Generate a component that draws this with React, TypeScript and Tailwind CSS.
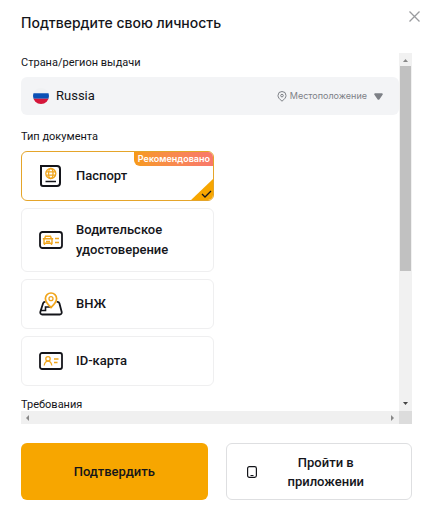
import { useState, type ReactNode } from "react";
import clsx from "clsx";

type DocumentType = "passport" | "driver" | "residence" | "id";

function PassportIcon() {
  return (
    <svg width="22" height="24" viewBox="0 0 22 24" fill="none">
      <path
        d="M1 2h16a3 3 0 0 1 3 3v14a3 3 0 0 1-3 3H3a2 2 0 0 1-2-2z"
        stroke="#14151a"
        strokeWidth="2"
      />
      <g stroke="#f0a51c" strokeWidth="1.300">
        <circle cx="10.800" cy="9.500" r="5" />
        <ellipse cx="10.800" cy="9.500" rx="2.200" ry="5" />
        <path d="M6.200 7.800h9.200M6.200 11.200h9.200" />
      </g>
      <path d="M5.500 17.500h10.500" stroke="#14151a" strokeWidth="1.600" />
    </svg>
  );
}

function DriverIcon() {
  return (
    <svg width="24" height="18" viewBox="0 0 24 18" fill="none">
      <rect x="1" y="1" width="22" height="16" rx="2.500" stroke="#14151a" strokeWidth="1.800" />
      <g stroke="#f0a51c" strokeWidth="1.400">
        <path d="M5.400 8.200l1.100-3h5l1.100 3M3.800 7.800h10.400M5 8.500v3.800h8V8.500M7 10.500h4M5.500 12v2M12.500 12v2" />
        <path d="M16 7.500h4M16 11.500h4" />
      </g>
    </svg>
  );
}

function ResidenceIcon() {
  return (
    <svg width="24" height="24" viewBox="0 0 24 24" fill="none">
      <path
        d="M6.500 9.800H6a2 2 0 0 0-1.900 1.400L1.300 20a2 2 0 0 0 1.900 2.500h17.600a2 2 0 0 0 1.900-2.500l-2.300-8.800a2 2 0 0 0-1.900-1.400h-.8"
        stroke="#14151a"
        strokeWidth="1.800"
      />
      <path d="M2 18.500h4.500v-3.500h4.500" stroke="#14151a" strokeWidth="1.600" />
      <path
        d="M12 15.500C8.500 12.400 6.400 9.700 6.400 6.600a5.600 5.600 0 0 1 11.200 0c0 3.100-2.100 5.800-5.600 8.900z"
        fill="#fff"
        stroke="#f0a51c"
        strokeWidth="1.700"
      />
      <circle cx="12" cy="6.700" r="2" stroke="#f0a51c" strokeWidth="1.300" />
    </svg>
  );
}

function IdIcon() {
  return (
    <svg width="24" height="18" viewBox="0 0 24 18" fill="none">
      <rect x="1" y="1" width="22" height="16" rx="2" stroke="#14151a" strokeWidth="1.800" />
      <g stroke="#f0a51c" strokeWidth="1.300">
        <circle cx="9" cy="6.800" r="2.200" />
        <path d="M5.200 13.500c.5-2.800 1.800-4.300 3.800-4.300s3.300 1.500 3.800 4.300M15 7h4.500M15 10.500h3.500" />
      </g>
    </svg>
  );
}

const DOCUMENTS: {
  type: DocumentType;
  label: string;
  icon: ReactNode;
  recommended?: boolean;
}[] = [
  { type: "passport", label: "Паспорт", icon: <PassportIcon />, recommended: true },
  { type: "driver", label: "Водительское удостоверение", icon: <DriverIcon /> },
  { type: "residence", label: "ВНЖ", icon: <ResidenceIcon /> },
  { type: "id", label: "ID-карта", icon: <IdIcon /> },
];

function CountrySelect() {
  return (
    <div className="flex h-[38px] items-center rounded-md bg-[#f3f4f6] px-3 text-[#7d8086]">
      <svg width="16" height="16" viewBox="0 0 16 16" className="shrink-0">
        <clipPath id="flag">
          <circle cx="8" cy="8" r="8" />
        </clipPath>
        <g clipPath="url(#flag)">
          <path d="M0 0h16v5.300H0z" fill="#f0f1f3" />
          <path d="M0 5.300h16v5.400H0z" fill="#0b50b5" />
          <path d="M0 10.700h16V16H0z" fill="#d5163a" />
        </g>
      </svg>
      <select
        id="country"
        defaultValue="ru"
        className="ml-[7px] min-w-0 flex-1 appearance-none bg-transparent text-[13px] text-[#14151a] outline-none"
      >
        <option value="ru">Russia</option>
      </select>
      <svg width="10" height="11" viewBox="0 0 10 11" fill="none" stroke="currentColor" className="shrink-0">
        <path d="M5 10.200C2.300 8 1 6.400 1 4.500a4 4 0 0 1 8 0c0 1.900-1.300 3.500-4 5.700z" />
        <circle cx="5" cy="4.600" r="1.300" />
      </svg>
      <span className="ml-[3px] font-['Inter','Noto_Sans',sans-serif] text-[9px]">Местоположение</span>
      <svg width="9" height="7" viewBox="0 0 9 7" fill="currentColor" className="ml-[7px] mr-1 shrink-0">
        <path d="M1.200.3h6.600c.9 0 1.300.8.800 1.500L5.500 6.200c-.5.700-1.500.7-2 0L.4 1.800C-.1 1.100.3.300 1.200.3z" />
      </svg>
    </div>
  );
}

function VerticalScrollbar() {
  return (
    <div className="flex flex-col items-center bg-[#f1f1f1] py-[6px]" aria-hidden="true">
      <svg width="5" height="3" viewBox="0 0 5 3" fill="#898989">
        <path d="M0 3L2.500 0 5 3z" />
      </svg>
      <div className="mt-1 h-[205px] w-[11px] bg-[#c1c1c1]" />
      <svg width="5" height="3" viewBox="0 0 5 3" fill="#444" className="mt-auto">
        <path d="M0 0L2.500 3 5 0z" />
      </svg>
    </div>
  );
}

function HorizontalScrollbar() {
  return (
    <div className="flex h-[13px] items-center justify-between bg-[#f0f0f0] px-[5px]" aria-hidden="true">
      <svg width="3" height="6" viewBox="0 0 3 6" fill="#888">
        <path d="M3 0L0 3l3 3z" />
      </svg>
      <svg width="3" height="6" viewBox="0 0 3 6" fill="#888">
        <path d="M0 0l3 3-3 3z" />
      </svg>
    </div>
  );
}

export default function App() {
  const [selected, setSelected] = useState<DocumentType>("passport");

  return (
    <main className="bg-white pl-[21px] pr-5 font-['Roboto','Noto_Sans',sans-serif] text-[#14151a]">
      <header className="relative pt-[13px]">
        <h1 className="font-['Inter','Noto_Sans',sans-serif] text-sm font-medium leading-5">
          Подтвердите свою личность
        </h1>
        <button
          type="button"
          aria-label="Закрыть"
          className="absolute -right-2 top-[11px]"
        >
          <svg width="11" height="11" viewBox="0 0 11 11" stroke="#999b9e" strokeWidth="1.300">
            <path d="M.5.500l10 10M10.500.500l-10 10" />
          </svg>
        </button>
      </header>

      <div className="mt-5 grid grid-cols-[minmax(0,1fr)_13px]">
        <div>
          <label htmlFor="country" className="block text-[11px] leading-5">
            Страна/регион выдачи
          </label>
          <div className="mt-1">
            <CountrySelect />
          </div>

          <fieldset className="mt-3">
            <legend className="text-[11px] leading-5">Тип документа</legend>
            <div className="mt-1 flex w-[193px] flex-col gap-[7px]">
              {DOCUMENTS.map((doc) => {
                const isSelected = doc.type === selected;
                return (
                  <label
                    key={doc.type}
                    className={clsx(
                      "relative flex min-h-[50px] cursor-pointer items-center overflow-hidden rounded-md border py-[11px] pl-[17px] pr-4",
                      isSelected ? "border-[#e5a52a]" : "border-[#efeff0]",
                    )}
                  >
                    <input
                      type="radio"
                      name="document"
                      value={doc.type}
                      checked={isSelected}
                      onChange={() => setSelected(doc.type)}
                      className="sr-only"
                    />
                    <span className="flex w-6 shrink-0 justify-center">{doc.icon}</span>
                    <span className="ml-[13px] text-[13px] font-medium leading-5">{doc.label}</span>
                    {doc.recommended && (
                      <span className="absolute -right-px -top-px rounded-bl-md bg-linear-to-r from-[#f79a16] to-[#f9776b] px-1 font-['Inter','Noto_Sans',sans-serif] text-[9px] font-semibold leading-[15px] text-white">
                        Рекомендовано
                      </span>
                    )}
                    {isSelected && (
                      <svg
                        width="24"
                        height="23"
                        viewBox="0 0 24 23"
                        fill="none"
                        className="absolute -bottom-px -right-px"
                      >
                        <path d="M24 0v23H0z" fill="#f7a600" />
                        <path d="M12 16l3 3 6-6" stroke="#14151a" strokeWidth="1.300" />
                      </svg>
                    )}
                  </label>
                );
              })}
            </div>
          </fieldset>

          <h2 className="mt-[13px] text-[11px] leading-3">Требования</h2>
        </div>
        <VerticalScrollbar />
        <HorizontalScrollbar />
        <div className="bg-[#dcdcdc]" />
      </div>

      <footer className="mt-[19px] grid grid-cols-2 gap-[18px]">
        <button
          type="button"
          className="min-h-[57px] rounded-md bg-[#f7a600] text-[13px] font-medium leading-5"
        >
          Подтвердить
        </button>
        <button
          type="button"
          className="flex min-h-[57px] items-center rounded-md border border-[#dedfe1] pl-5 pr-4 text-[13px] font-medium leading-[19px]"
        >
          <svg width="10" height="12" viewBox="0 0 10 12" fill="none" stroke="#14151a" className="shrink-0">
            <rect x=".6" y=".6" width="8.800" height="10.800" rx="1.800" strokeWidth="1.200" />
            <path d="M3.500 9.500h3" />
          </svg>
          <span className="flex-1 px-6 text-center">Пройти в приложении</span>
        </button>
      </footer>
    </main>
  );
}
